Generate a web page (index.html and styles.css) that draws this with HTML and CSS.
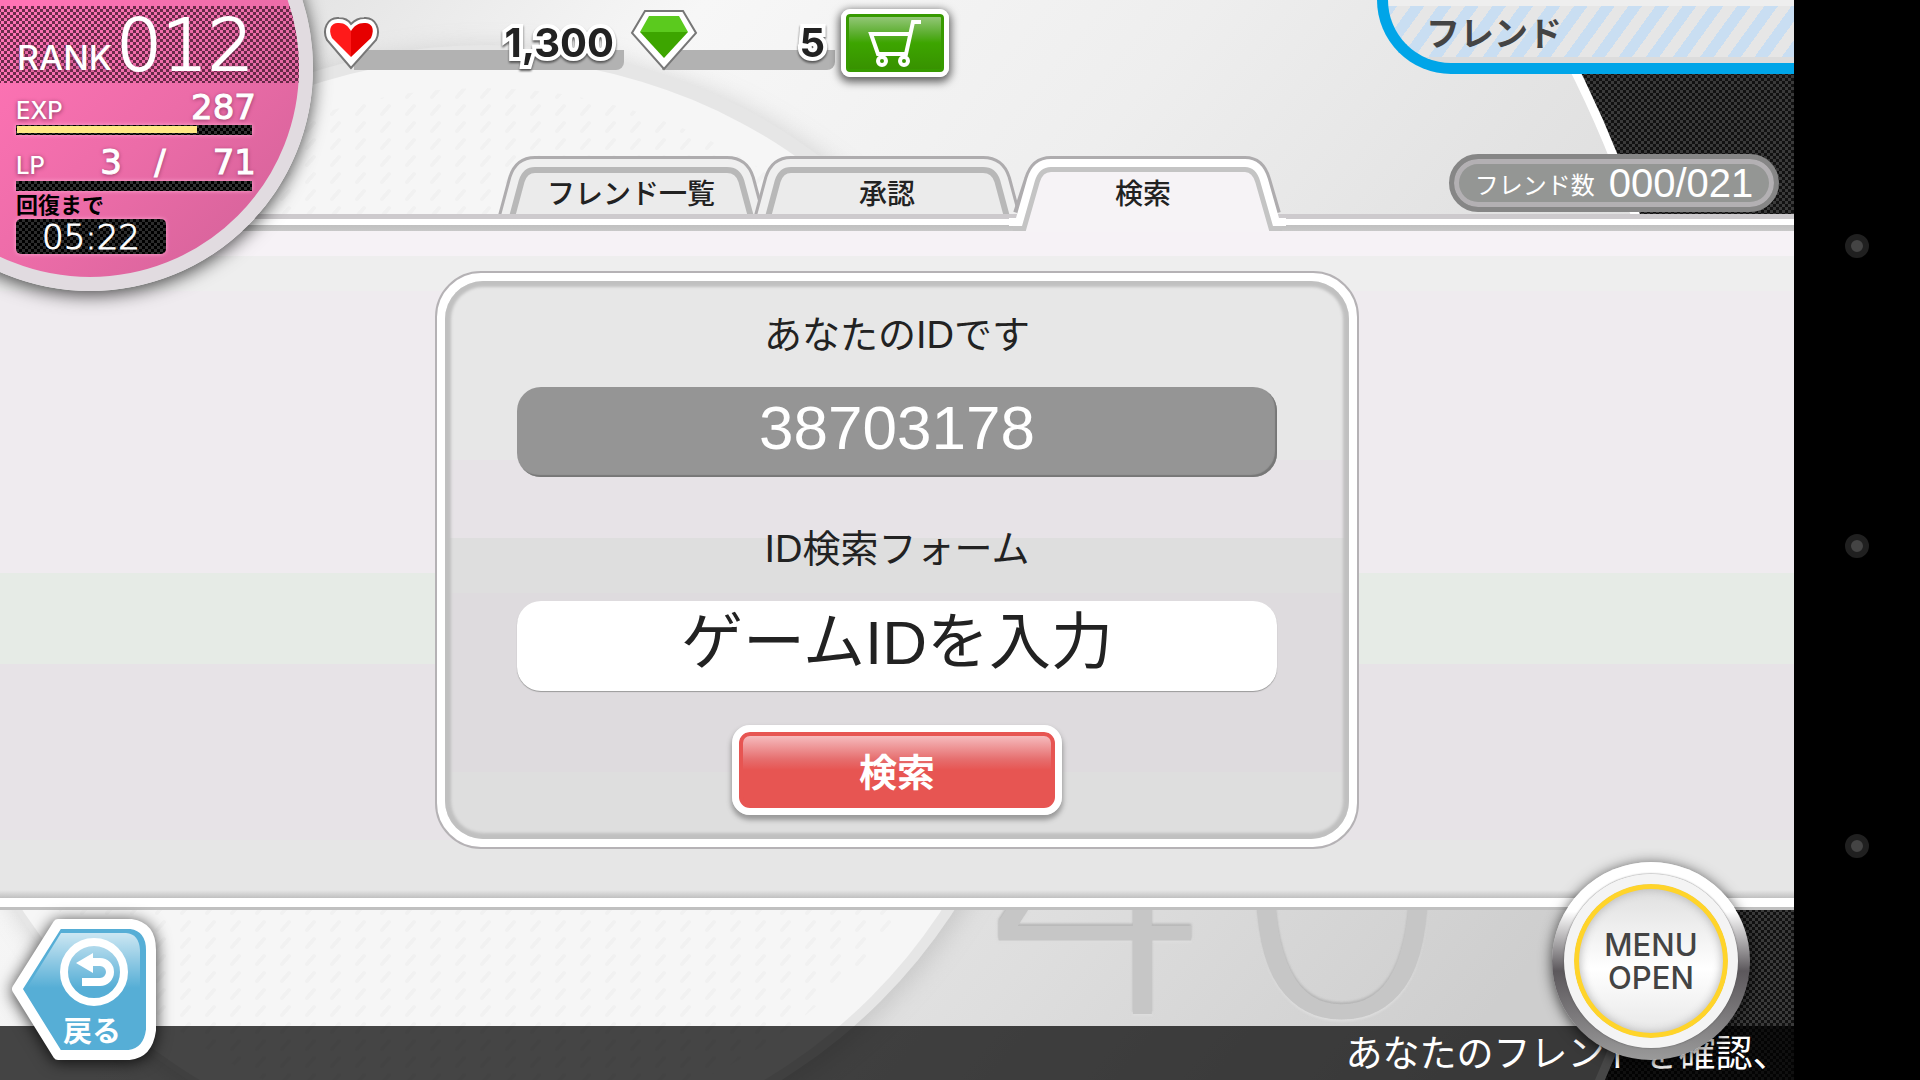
FILE: index.html
```html
<!DOCTYPE html>
<html lang="ja">

<head>
    <meta charset="utf-8">
    <title>フレンド</title>
    <meta name="viewport" content="width=device-width, initial-scale=1">
    <link rel="stylesheet" href="styles.css">
</head>

<body>
    <div class="game">
        <!-- backdrop: two big discs over a dark mesh -->
        <svg class="backdrop" viewBox="0 0 1794 1080" preserveAspectRatio="none" aria-hidden="true">
            <defs>
                <pattern id="mesh" width="6" height="6" patternUnits="userSpaceOnUse">
                    <rect width="6" height="6" fill="#111"/>
                    <rect width="3" height="3" fill="#3a3a3a"/>
                    <rect x="3" y="3" width="3" height="3" fill="#3a3a3a"/>
                </pattern>
                <pattern id="hatch" width="25" height="17" patternUnits="userSpaceOnUse">
                    <path d="M7 12 L14 4" stroke="#f1f1f1" stroke-width="4" stroke-linecap="round"/>
                </pattern>
                <linearGradient id="big" gradientUnits="userSpaceOnUse" x1="300" y1="0" x2="1500" y2="1000">
                    <stop offset="0" stop-color="#e4e4e4"/>
                    <stop offset="0.2" stop-color="#f7f7f7"/>
                    <stop offset="0.45" stop-color="#eeeeee"/>
                    <stop offset="0.75" stop-color="#dedede"/>
                    <stop offset="1" stop-color="#cecece"/>
                </linearGradient>
                <filter id="soft" x="-10%" y="-10%" width="120%" height="120%">
                    <feGaussianBlur stdDeviation="12"/>
                </filter>
            </defs>
            <rect width="1794" height="1080" fill="url(#mesh)"/>
            <circle cx="508" cy="602" r="1192" fill="url(#big)" stroke="#fff" stroke-width="9"/>
            <text class="backdrop-number" x="980" y="1014">40</text>
            <circle cx="489" cy="609" r="562" fill="#999" opacity="0.35" filter="url(#soft)"/>
            <circle cx="485" cy="605" r="560" fill="#e6e6e6"/>
            <circle cx="482" cy="608" r="550" fill="#f6f6f6"/>
            <circle cx="482" cy="608" r="520" fill="url(#hatch)"/>
        </svg>

        <header class="top">
            <div class="hud">
                <div class="counter counter-heart">
                    <svg width="60" height="56" viewBox="0 0 60 56" aria-hidden="true">
                        <path d="M29 53 L5 25 C0 15 5 2 17 3 C23 3 27 6 29 9 C32 6 36 3 42 3 C54 2 59 15 54 25 Z" fill="#fff" stroke="#777" stroke-width="2"/>
                        <path d="M29 42 L10 23 C5 12 11 7 17 8 C23 8 26 11 29 16 Z" fill="#ff1a1a"/>
                        <path d="M29 42 L49 23 C54 12 48 7 42 8 C36 8 32 11 29 16 Z" fill="#e60000"/>
                    </svg>
                    <span>1,300</span>
                </div>
                <div class="counter counter-gem">
                    <svg width="68" height="62" viewBox="0 0 68 62" aria-hidden="true">
                        <path d="M15 2 H53 L66 24 L34 60 L2 24 Z" fill="#fff" stroke="#777" stroke-width="2"/>
                        <path d="M19 7 H49 L58 23 H10 Z" fill="#5bca1e"/>
                        <path d="M10 23 H58 L34 49 Z" fill="#3da500"/>
                    </svg>
                    <span>5</span>
                </div>
                <button class="cart" aria-label="ショップ">
                    <svg width="60" height="50" viewBox="0 0 60 50" fill="none" stroke="#fff" stroke-width="4" aria-hidden="true">
                        <path d="M56 4 H48 L41 36 H13 L6 16 H45"/>
                        <circle cx="17" cy="43" r="4"/>
                        <circle cx="39" cy="43" r="4"/>
                    </svg>
                </button>
            </div>
            <h1 class="title">フレンド</h1>

            <nav class="tabs">
                <button class="tab">
                    <svg viewBox="0 0 256 77" aria-hidden="true">
                        <defs>
                            <clipPath id="tab-inside">
                                <path d="M3 60 L12 25 Q17 9 32 9 H224 Q240 9 245 25 L254 60 V77 H3 Z"/>
                            </clipPath>
                        </defs>
                        <path class="tab-edge" d="M1 66 L12 25 Q17 9 32 9 H224 Q240 9 245 25 L256 66"/>
                        <path class="tab-fill" d="M3 60 L12 25 Q17 9 32 9 H224 Q240 9 245 25 L254 60 Z"/>
                        <path class="tab-shade" clip-path="url(#tab-inside)" d="M1 66 L12 25 Q17 9 32 9 H224 Q240 9 245 25 L256 66"/>
                        <path class="tab-line" d="M1 66 L12 25 Q17 9 32 9 H224 Q240 9 245 25 L256 66"/>
                    </svg>
                    <span>フレンド一覧</span>
                </button>
                <button class="tab">
                    <svg viewBox="0 0 256 77" aria-hidden="true">
                        <path class="tab-edge" d="M1 66 L12 25 Q17 9 32 9 H224 Q240 9 245 25 L256 66"/>
                        <path class="tab-fill" d="M3 60 L12 25 Q17 9 32 9 H224 Q240 9 245 25 L254 60 Z"/>
                        <path class="tab-shade" clip-path="url(#tab-inside)" d="M1 66 L12 25 Q17 9 32 9 H224 Q240 9 245 25 L256 66"/>
                        <path class="tab-line" d="M1 66 L12 25 Q17 9 32 9 H224 Q240 9 245 25 L256 66"/>
                    </svg>
                    <span>承認</span>
                </button>
                <button class="tab tab-active">
                    <svg viewBox="0 0 256 77" aria-hidden="true">
                        <defs>
                            <clipPath id="tab-active-inside">
                                <path d="M-2 68 H4 L16 26 Q21 9 36 9 H230 Q244 9 249 26 L261 68 H267 V77 H-2 Z"/>
                            </clipPath>
                        </defs>
                        <path class="tab-edge" d="M5 60 L16 26 Q21 9 36 9 H230 Q244 9 249 26 L259 60"/>
                        <path class="tab-fill" d="M-2 68 H4 L16 26 Q21 9 36 9 H230 Q244 9 249 26 L261 68 H267 V78 H-2 Z"/>
                        <path class="tab-shade" clip-path="url(#tab-active-inside)" d="M-6 68 H4 L16 26 Q21 9 36 9 H230 Q244 9 249 26 L261 68 H271"/>
                        <path class="tab-line" d="M-6 68 H4 L16 26 Q21 9 36 9 H230 Q244 9 249 26 L261 68 H271"/>
                    </svg>
                    <span>検索</span>
                </button>
            </nav>
            <p class="friend-count"><span>フレンド数</span> <b>000/021</b></p>
        </header>

        <section class="status">
            <div class="rank"><span>RANK</span><b>012</b></div>
            <div class="stat"><span>EXP</span><b>287</b></div>
            <div class="bar"><i style="width: 77%"></i></div>
            <div class="stat stat-lp"><span>LP</span><b>3</b><b>/</b><b>71</b></div>
            <div class="bar"></div>
            <p class="recover">回復まで</p>
            <p class="timer">05:22</p>
        </section>

        <main class="panel">
            <div class="card">
                <form class="card-in" onsubmit="return false">
                    <p class="label">あなたのIDです</p>
                    <output class="my-id">38703178</output>
                    <label class="label" for="game-id">ID検索フォーム</label>
                    <input class="game-id" id="game-id" type="text" placeholder="ゲームIDを入力">
                    <button class="search">検索</button>
                </form>
            </div>
        </main>

        <footer class="bottom">
            <p class="ticker">あなたのフレンドを確認、</p>
            <button class="back">
                <svg viewBox="0 0 150 146" aria-hidden="true">
                    <defs>
                        <linearGradient id="gloss" x1="0" y1="0" x2="0" y2="1">
                            <stop offset="0" stop-color="#fff" stop-opacity="0.7"/>
                            <stop offset="1" stop-color="#fff" stop-opacity="0"/>
                        </linearGradient>
                    </defs>
                    <path d="M47 6 H120 Q140 9 140 32 V112 Q137 135 118 137 H47 L6 71 Z" fill="#56aed6" stroke="#fff" stroke-width="10" stroke-linejoin="round"/>
                    <path d="M50 15 H115 Q128 16 129 32 V70 H16 Z" fill="url(#gloss)"/>
                    <circle cx="83" cy="54" r="30" fill="none" stroke="#fff" stroke-width="8"/>
                    <path d="M71 64 H89 A10 10 0 0 0 89 44 H80" fill="none" stroke="#fff" stroke-width="8"/>
                    <path d="M65 45 L82 35 V55 Z" fill="#fff"/>
                </svg>
                <span>戻る</span>
            </button>
            <button class="menu"><span>MENU<br>OPEN</span></button>
        </footer>
    </div>

    <aside class="phone-nav">
        <button aria-label="recent"></button>
        <button aria-label="home"></button>
        <button aria-label="back"></button>
    </aside>
</body>

</html>
```

FILE: styles.css
```css
*, *::before, *::after {
    box-sizing: border-box;
}

body {
    display: flex;
    min-height: 100vh;
    margin: 0;
    background: #000;
    color: #222;
    font-family: "Liberation Sans", "Noto Sans CJK JP", sans-serif;
}

p, h1 {
    margin: 0;
}

button {
    padding: 0;
    border: none;
    background: none;
    color: inherit;
    font: inherit;
    cursor: pointer;
}

.game {
    position: relative;
    display: flex;
    flex: 1;
    flex-direction: column;
    overflow: hidden;
}

.backdrop {
    position: absolute;
    width: 100%;
    height: 100%;
}

.backdrop-number {
    fill: #c6c6c6;
    font: 200 380px "DejaVu Sans", sans-serif;
    filter: drop-shadow(0 -2px 1px #b4b4b4) drop-shadow(0 2px 1px #ddd);
}

/* top row */
.top {
    position: relative;
    display: grid;
    grid-template-columns: 1fr auto;
    grid-template-rows: 1fr auto;
    height: 214px;
}

.hud {
    display: flex;
    gap: 6px;
    padding: 9px 0 0 322px;
}

.counter {
    display: flex;
    align-items: flex-start;
    justify-content: space-between;
    height: 61px;
    padding-right: 10px;
    border-radius: 0 0 8px 0;
    background: linear-gradient(#b2b2b2, #b2b2b2) right bottom / calc(100% - 32px) 20px no-repeat;
    color: #222;
    font: 700 40px/68px Inter, sans-serif;
}

.counter-heart {
    width: 302px;
}

.counter-heart svg {
    margin-top: 6px;
}

.counter-gem {
    width: 205px;
}

.counter span {
    -webkit-text-stroke: 8px #fff;
    paint-order: stroke fill;
    filter: drop-shadow(0 2px 1px #555);
}

.cart {
    display: grid;
    place-items: center;
    width: 108px;
    height: 68px;
    border: 5px solid #fff;
    border-radius: 9px;
    background: linear-gradient(#9ccb83, #59ad2b 35%, #3da500 50%, #379000);
    box-shadow: 0 3px 8px 2px rgba(0, 0, 0, 0.6), inset 0 0 0 3px #379a00;
}

.title {
    width: 417px;
    height: 74px;
    padding-left: 38px;
    border-bottom: 11px solid #00a5e8;
    border-left: 11px solid #00a5e8;
    border-bottom-left-radius: 74px;
    background:
        linear-gradient(#eee 6px, transparent 6px, transparent 57px, #dcdcdc 57px),
        repeating-linear-gradient(126deg, #c9def2 0, #c9def2 11px, #e6e6e6 11px, #e6e6e6 22px);
    color: #444;
    font: 700 34px/64px "Noto Sans CJK JP", sans-serif;
}

.tabs {
    display: flex;
    justify-content: center;
    grid-column: 1 / 3;
    grid-row: 2;
    height: 77px;
    margin-bottom: -17px;
    padding-right: 20px;
}

.tab {
    position: relative;
    width: 256px;
    height: 60px;
    font: 500 28px/76px "Noto Sans CJK JP", sans-serif;
}

/* runs over the panel's top line */
.tab-active {
    z-index: 2;
}

.tab svg {
    position: absolute;
    top: 0;
    left: 0;
    width: 256px;
    height: 77px;
    overflow: visible;
}

.tab span {
    position: relative;
}

.tab path {
    fill: none;
}

.tab .tab-edge {
    stroke: #aeacae;
    stroke-width: 14px;
}

.tab .tab-fill {
    fill: #ebebeb;
}

.tab .tab-shade {
    stroke: #b8b8b8;
    stroke-width: 20px;
}

.tab .tab-line {
    stroke: #efefef;
    stroke-width: 8px;
}

.tab-active .tab-fill {
    fill: #f6f3f6;
}

.tab-active .tab-shade {
    stroke: #c4c4c4;
    stroke-width: 18px;
}

.tab-active .tab-line {
    stroke: #fff;
}

.friend-count {
    display: flex;
    align-items: center;
    justify-content: center;
    grid-column: 2;
    grid-row: 2;
    gap: 14px;
    justify-self: end;
    width: 330px;
    height: 58px;
    margin: 0 15px 0 0;
    border: 5px solid #868686;
    border-radius: 29px;
    background: #949694;
    box-shadow: inset 0 0 0 5px #b3b0b3;
    color: #fff;
    font-size: 24px;
}

.friend-count b {
    font-size: 40px;
    font-weight: 400;
}

/* rank disc in the corner */
.status {
    position: absolute;
    z-index: 3;
    top: 0;
    left: 0;
    width: 300px;
    padding: 6px 0 0 16px;
    color: #fff;
    font-family: Inter, "Noto Sans CJK JP", sans-serif;
    text-shadow: 0 1px 4px #803058;
}

.status::before {
    content: "";
    position: absolute;
    z-index: -2;
    top: -155px;
    left: -133px;
    width: 446px;
    height: 446px;
    border: 14px solid #e1dbe0;
    border-radius: 50%;
    background: linear-gradient(135deg, #ff73b5 35%, #ec6ca8 65%, #cf6096);
    box-shadow: 0 4px 18px rgba(0, 0, 0, 0.7);
}

/* mesh strip behind the rank */
.status::after {
    content: "";
    position: absolute;
    z-index: -1;
    top: -141px;
    left: -119px;
    width: 418px;
    height: 418px;
    border-radius: 50%;
    background: repeating-conic-gradient(rgba(60, 20, 40, 0.75) 0 25%, transparent 0 50%) 0 0 / 6px 6px;
    clip-path: inset(147px 0 194px);
}

.rank {
    display: flex;
    align-items: baseline;
    gap: 4px;
    height: 77px;
    margin-left: 1px;
    font-size: 34px;
    font-weight: 500;
    line-height: 77px;
}

.rank b {
    font-family: "DejaVu Sans", sans-serif;
    font-size: 72px;
    font-weight: 200;
    line-height: 78px;
    -webkit-text-stroke: 2px #fff;
}

.stat {
    display: flex;
    align-items: baseline;
    justify-content: space-between;
    width: 240px;
    height: 42px;
    font-size: 24px;
    font-weight: 500;
    line-height: 48px;
}

.stat b {
    font-family: "DejaVu Sans", sans-serif;
    font-size: 34px;
    font-weight: 400;
    -webkit-text-stroke: 1px #fff;
}

.stat-lp {
    display: grid;
    grid-template-columns: 72px 46px 52px 70px;
    height: 46px;
    line-height: 54px;
    text-align: center;
}

.stat-lp span {
    text-align: left;
}

.stat-lp b:last-child {
    text-align: right;
}

.bar {
    width: 236px;
    height: 10px;
    padding: 1px;
    background: repeating-conic-gradient(#000 0 25%, #333 0 50%) 0 0 / 6px 6px;
    box-shadow: 0 0 4px #ffa8d2;
}

.bar i {
    display: block;
    height: 7px;
    background: #ffe885;
}

.recover {
    color: #000;
    font-size: 22px;
    font-weight: 700;
    line-height: 28px;
    text-shadow: none;
}

.timer {
    width: 150px;
    height: 35px;
    border-radius: 5px;
    background: repeating-conic-gradient(#000 0 25%, #2c2c2c 0 50%) 0 0 / 6px 6px;
    box-shadow: 0 0 4px #ffa8d2;
    font-family: "DejaVu Sans", sans-serif;
    font-size: 34px;
    font-weight: 200;
    line-height: 37px;
    text-align: center;
    text-shadow: none;
    -webkit-text-stroke: 1px #fff;
}

/* main panel */
.panel {
    position: relative;
    z-index: 1;
    display: flex;
    flex: 1;
    justify-content: center;
    align-items: flex-start;
    padding: 57px 0 40px;
    background:
        linear-gradient(#cdcacd 5px, #fff 5px, #fff 11px, #c0c0c0 11px, #c8c8c8) top / 100% 17px no-repeat,
        linear-gradient(#e6e6e6, #c0c0c0 8px, #fff 8px, #fff 17px, #c0c0c0 17px) bottom / 100% 20px no-repeat,
        linear-gradient(#f6f2f6 6%, #eee 6%, #eee 11%, #efebef 11%, #efebef 51.6%, #e6ebe6 51.6%, #e6ebe6 64.7%, #e7e3e7 64.7%, #e7e3e7 90%, #e6e6e6 90%);
}

.card {
    width: 52%;
    max-width: 924px;
    padding: 8px;
    border: 2px solid #b5b2b5;
    border-radius: 46px;
    background: #fff;
}

.card-in {
    display: flex;
    flex-direction: column;
    align-items: center;
    gap: 32px;
    padding: 34px 0 24px;
    border-radius: 38px;
    background: linear-gradient(#e7e7e7 32%, #e7e3e7 32%, #e7e3e7 46%, #dedede 46%, #dedede 56%, #dedbde 56%, #dedbde 88%, #dedede 88%);
    box-shadow: inset 0 0 3px 6px #c0c0c0;
}

.label {
    font-size: 38px;
    line-height: 40px;
}

.my-id, .game-id {
    width: 84%;
    height: 90px;
    border: none;
    border-radius: 24px;
    font-size: 62px;
    line-height: 82px;
    text-align: center;
}

.my-id {
    margin-bottom: 20px;
    background: #959595;
    box-shadow: inset -2px -2px 1px #777;
    color: #fff;
}

.game-id {
    margin-bottom: 2px;
    padding: 0 0 8px;
    background: #fff;
    box-shadow: 0 1px 1px #999;
    font-family: inherit;
}

.game-id::placeholder {
    color: #222;
    opacity: 1;
}

.search {
    width: 330px;
    height: 90px;
    border: 7px solid #fff;
    border-radius: 18px;
    background: linear-gradient(#f8c8cb, #e66e6e 36%, #e75552 50%);
    box-shadow: 0 4px 5px 1px #999, inset 0 0 0 4px #e75552;
    color: #fff;
    font: 700 38px/76px "Noto Sans CJK JP", sans-serif;
}

/* footer */
.bottom {
    position: relative;
    z-index: 2;
    display: flex;
    align-items: flex-end;
    height: 170px;
}

.ticker {
    flex: 1;
    height: 54px;
    padding-left: 75%;
    overflow: hidden;
    background: rgba(0, 0, 0, 0.72);
    color: #fff;
    font-size: 37px;
    line-height: 58px;
    white-space: nowrap;
}

.back {
    position: absolute;
    bottom: 16px;
    left: 11px;
    width: 150px;
    height: 146px;
    padding: 76px 4px 0 16px;
    color: #fff;
    font: 700 29px/36px "Noto Sans CJK JP", sans-serif;
}

.back svg {
    position: absolute;
    top: 0;
    left: 0;
    filter: drop-shadow(0 2px 8px rgba(0, 0, 0, 0.8));
}

.back span {
    position: relative;
}

.menu {
    position: absolute;
    right: 44px;
    bottom: 20px;
    width: 198px;
    height: 198px;
    border-radius: 50%;
    background: linear-gradient(#fff 25%, #5c585c 55%, #9a9a9a);
    box-shadow: 0 2px 14px rgba(0, 0, 0, 0.7);
}

.menu span {
    display: grid;
    place-content: center;
    width: 174px;
    height: 174px;
    margin: 0 auto;
    border: 10px solid #f4f4f4;
    border-radius: 50%;
    background: linear-gradient(#ddd, #fff 55%, #e6e6e6);
    box-shadow: 0 0 2px #555, inset 0 0 0 5px #ffd42a, inset 0 0 8px 6px #bbb;
    color: #444;
    font: 500 31px/33px Inter, sans-serif;
}

/* android buttons on the side */
.phone-nav {
    display: flex;
    flex-direction: column;
    align-items: center;
    justify-content: center;
    gap: 276px;
    width: 126px;
    padding-top: 12px;
    background: #000;
}

.phone-nav button {
    width: 24px;
    height: 24px;
    border: 6px solid #202020;
    border-radius: 50%;
    background: #444;
}
```
